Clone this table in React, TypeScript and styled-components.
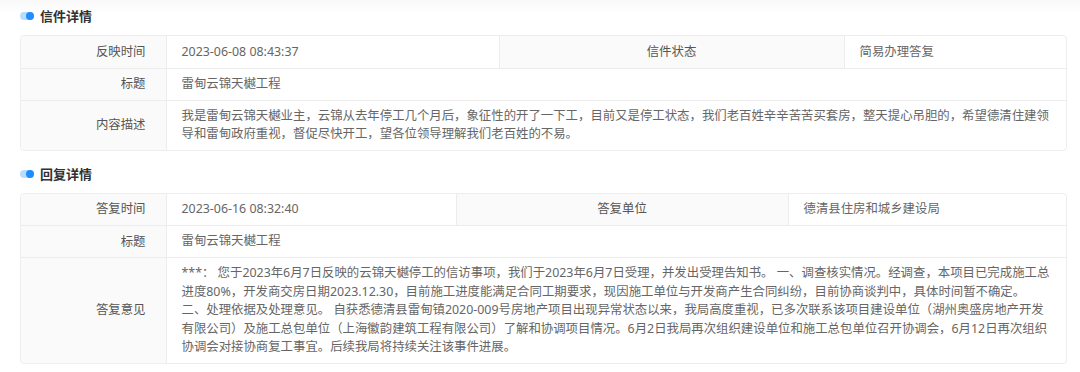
import React from 'react';
import styled, { createGlobalStyle } from 'styled-components';

const GlobalStyle = createGlobalStyle`
  html, body {
    margin: 0;
    padding: 0;
    background: #fff;
  }
  body {
    font-family: "Noto Sans", "Noto Sans CJK SC", sans-serif;
    color: #606266;
  }
`;

const Page = styled.div`
  width: 1080px;
  height: 372px;
  box-sizing: border-box;
  padding: 6px 13px 0 20px;
  background: linear-gradient(to bottom, rgba(0, 0, 0, 0.025), rgba(0, 0, 0, 0) 14px), #fff;
  overflow: hidden;
`;

const Section = styled.section`
  & + & {
    margin-top: 13px;
  }
`;

const Header = styled.div`
  display: flex;
  align-items: center;
  gap: 6px;
  height: 20px;
  margin-bottom: 9px;
`;

const Dot = styled.span`
  position: relative;
  display: inline-block;
  width: 14px;
  height: 8px;
  border-radius: 4px;
  background: #b9dcff;

  &::after {
    content: '';
    position: absolute;
    right: 0;
    top: 0;
    width: 8px;
    height: 8px;
    border-radius: 50%;
    background: #1f8cff;
  }
`;

const HeaderTitle = styled.h3`
  margin: 0;
  font-size: 13px;
  line-height: 20px;
  font-weight: 700;
  color: #303133;
`;

const Box = styled.div`
  border: 1px solid #ededed;
  border-radius: 4px;
  overflow: hidden;
`;

const Table = styled.table`
  width: 100%;
  table-layout: fixed;
  border-collapse: collapse;
  font-size: 12.4px;
`;

const Row = styled.tr`
  & + & {
    border-top: 1px solid #ececec;
  }
`;

const Label = styled.th<{ $center?: boolean }>`
  height: 32px;
  box-sizing: border-box;
  padding: 6px ${p => (p.$center ? '10px' : '20px')} 6px 10px;
  background: #fafafa;
  color: #555;
  font-weight: 400;
  line-height: 18px;
  text-align: ${p => (p.$center ? 'center' : 'right')};
  border-right: 1px solid #ececec;
`;

const Value = styled.td`
  height: 32px;
  box-sizing: border-box;
  padding: 6px 8px 6px 15px;
  color: #666;
  line-height: 18.5px;
  white-space: pre-line;
  word-break: break-all;
  border-right: 1px solid #ececec;

  &:last-child {
    border-right: none;
  }
`;

type Field = { label: string; value: string };

interface DetailProps {
  title: string;
  widths: number[];
  top: [Field, Field];
  subject: string;
  body: Field;
}

const Detail: React.FC<DetailProps> = ({ title, widths, top, subject, body }) => (
  <Section>
    <Header>
      <Dot />
      <HeaderTitle>{title}</HeaderTitle>
    </Header>
    <Box>
      <Table>
        <colgroup>
          {widths.map((w, i) => (
            <col key={i} style={{ width: w }} />
          ))}
        </colgroup>
        <tbody>
          <Row>
            <Label>{top[0].label}</Label>
            <Value>{top[0].value}</Value>
            <Label $center>{top[1].label}</Label>
            <Value>{top[1].value}</Value>
          </Row>
          <Row>
            <Label>标题</Label>
            <Value colSpan={3}>{subject}</Value>
          </Row>
          <Row>
            <Label>{body.label}</Label>
            <Value colSpan={3}>{body.value}</Value>
          </Row>
        </tbody>
      </Table>
    </Box>
  </Section>
);

const letterText =
  '我是雷甸云锦天樾业主，云锦从去年停工几个月后，象征性的开了一下工，目前又是停工状态，我们老百姓辛辛苦苦买套房，整天提心吊胆的，希望德清住建领导和雷甸政府重视，督促尽快开工，望各位领导理解我们老百姓的不易。';

// line breaks kept where the original reply wraps
const replyText =
  '***：  您于2023年6月7日反映的云锦天樾停工的信访事项，我们于2023年6月7日受理，并发出受理告知书。 一、调查核实情况。经调查，本项目已完成施工总进度80%，开发商交房日期2023.12.30，目前施工进度能满足合同工期要求，现因施工单位与开发商产生合同纠纷，目前协商谈判中，具体时间暂不确定。\n' +
  '二、处理依据及处理意见。 自获悉德清县雷甸镇2020-009号房地产项目出现异常状态以来，我局高度重视，已多次联系该项目建设单位（湖州奥盛房地产开发\n' +
  '有限公司）及施工总包单位（上海徽韵建筑工程有限公司）了解和协调项目情况。6月2日我局再次组织建设单位和施工总包单位召开协调会，6月12日再次组织\n' +
  '协调会对接协商复工事宜。后续我局将持续关注该事件进展。';

export default function App() {
  return (
    <>
      <GlobalStyle />
      <Page>
        <Detail
          title="信件详情"
          widths={[145, 333, 345, 224]}
          top={[
            { label: '反映时间', value: '2023-06-08 08:43:37' },
            { label: '信件状态', value: '简易办理答复' },
          ]}
          subject="雷甸云锦天樾工程"
          body={{ label: '内容描述', value: letterText }}
        />
        <Detail
          title="回复详情"
          widths={[145, 290, 332, 280]}
          top={[
            { label: '答复时间', value: '2023-06-16 08:32:40' },
            { label: '答复单位', value: '德清县住房和城乡建设局' },
          ]}
          subject="雷甸云锦天樾工程"
          body={{ label: '答复意见', value: replyText }}
        />
      </Page>
    </>
  );
}
